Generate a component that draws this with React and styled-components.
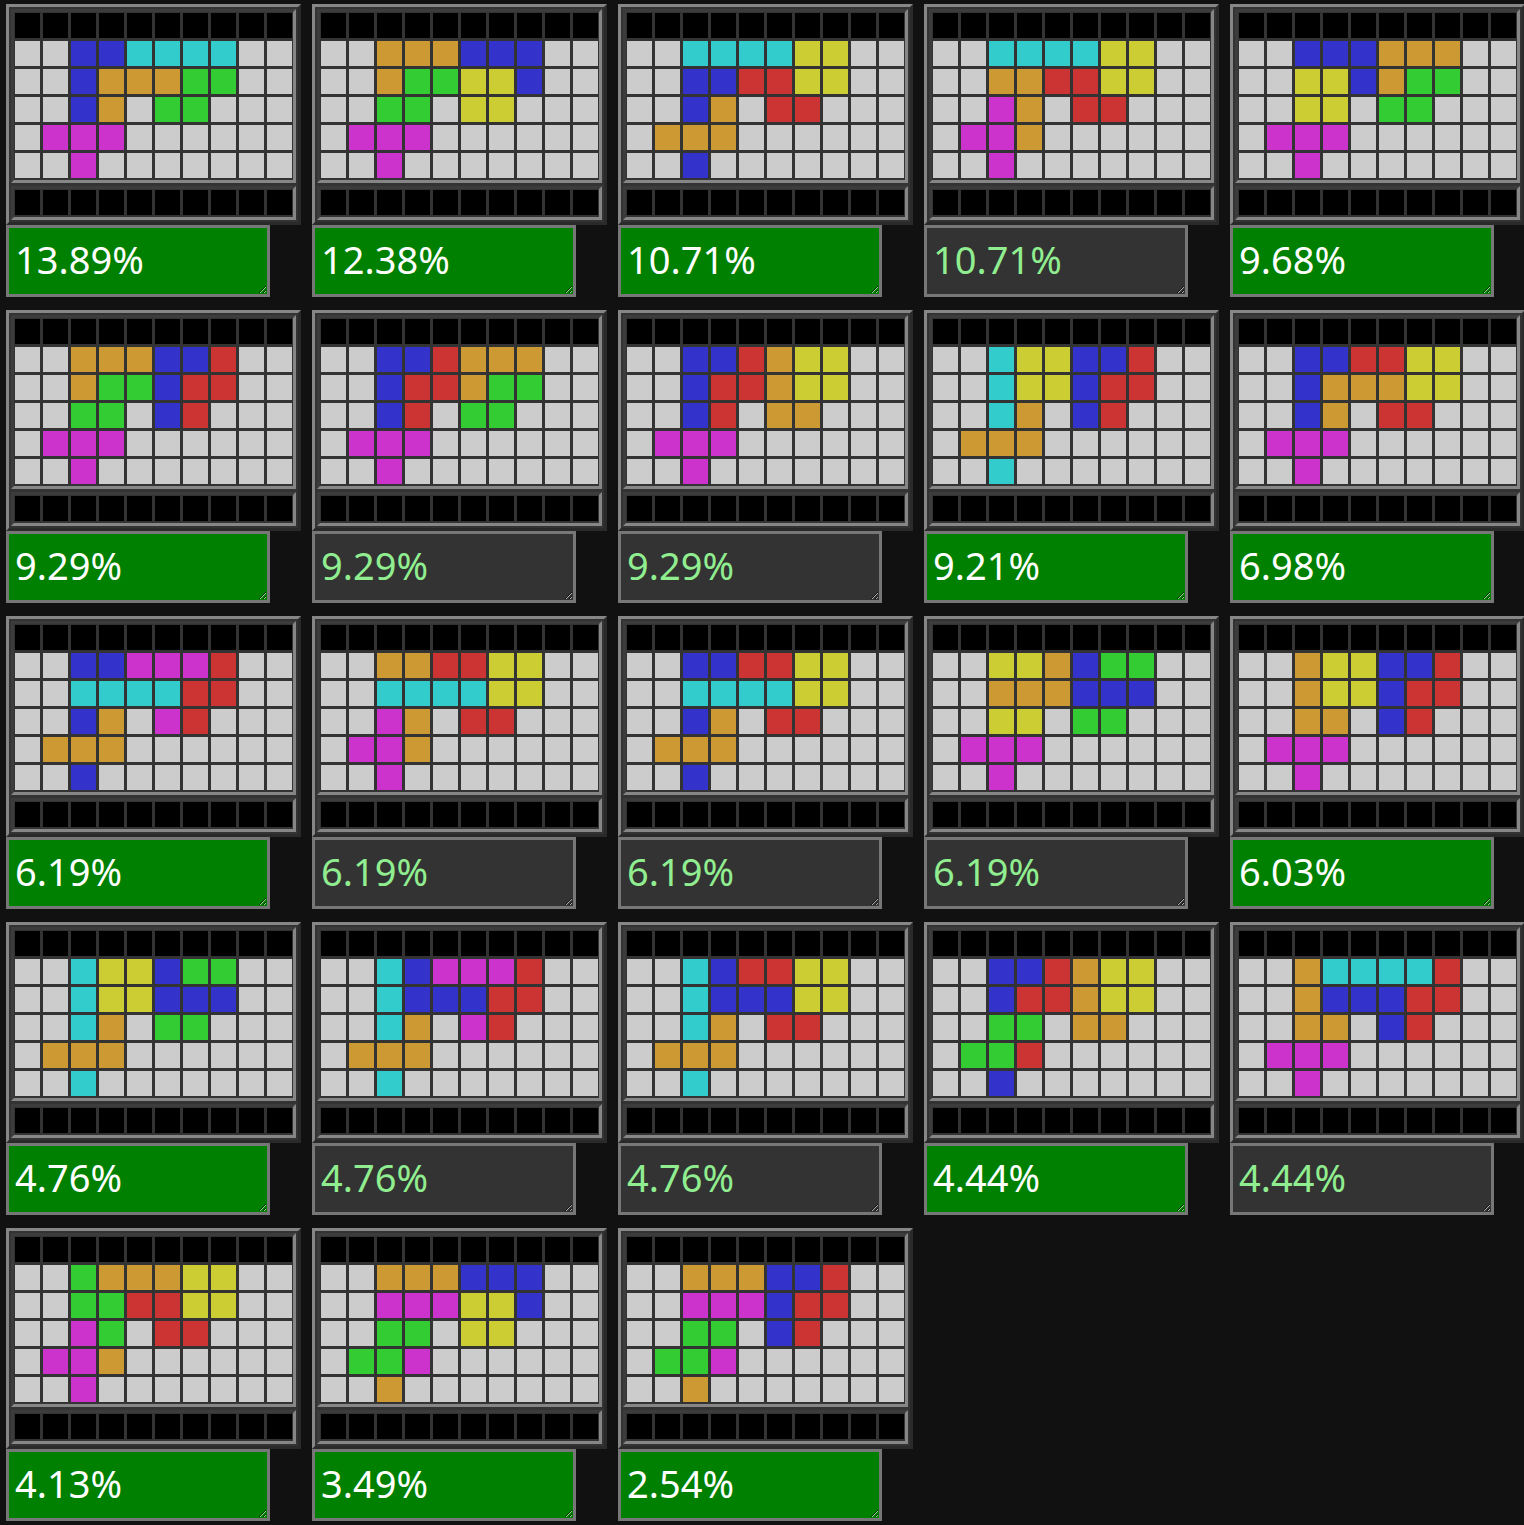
import React from 'react'
import styled, { createGlobalStyle } from 'styled-components'

const GlobalStyle = createGlobalStyle`
  html, body {
    margin: 0;
    padding: 0;
    background: #111111;
  }
  body {
    font-family: "Noto Sans", "Open Sans", sans-serif;
  }
`

const COLORS = {
  '.': '#cccccc',
  B: '#3333cc',
  C: '#33cccc',
  O: '#cc9933',
  G: '#33cc33',
  M: '#cc33cc',
  Y: '#cccc33',
  R: '#cc3333',
  K: '#000000',
}

// each board: 5 rows of 10 cells, score, whether it's a best pick
const results = [
  { score: '13.89%', best: true, rows: ['..BBCCCC..', '..BOOOGG..', '..BO.GG...', '.MMM......', '..M.......'] },
  { score: '12.38%', best: true, rows: ['..OOOBBB..', '..OGGYYB..', '..GG.YY...', '.MMM......', '..M.......'] },
  { score: '10.71%', best: true, rows: ['..CCCCYY..', '..BBRRYY..', '..BO.RR...', '.OOO......', '..B.......'] },
  { score: '10.71%', best: false, rows: ['..CCCCYY..', '..OORRYY..', '..MO.RR...', '.MMO......', '..M.......'] },
  { score: '9.68%', best: true, rows: ['..BBBOOO..', '..YYBOGG..', '..YY.GG...', '.MMM......', '..M.......'] },

  { score: '9.29%', best: true, rows: ['..OOOBBR..', '..OGGBRR..', '..GG.BR...', '.MMM......', '..M.......'] },
  { score: '9.29%', best: false, rows: ['..BBROOO..', '..BRROGG..', '..BR.GG...', '.MMM......', '..M.......'] },
  { score: '9.29%', best: false, rows: ['..BBROYY..', '..BRROYY..', '..BR.OO...', '.MMM......', '..M.......'] },
  { score: '9.21%', best: true, rows: ['..CYYBBR..', '..CYYBRR..', '..CO.BR...', '.OOO......', '..C.......'] },
  { score: '6.98%', best: true, rows: ['..BBRRYY..', '..BOOOYY..', '..BO.RR...', '.MMM......', '..M.......'] },

  { score: '6.19%', best: true, rows: ['..BBMMMR..', '..CCCCRR..', '..BO.MR...', '.OOO......', '..B.......'] },
  { score: '6.19%', best: false, rows: ['..OORRYY..', '..CCCCYY..', '..MO.RR...', '.MMO......', '..M.......'] },
  { score: '6.19%', best: false, rows: ['..BBRRYY..', '..CCCCYY..', '..BO.RR...', '.OOO......', '..B.......'] },
  { score: '6.19%', best: false, rows: ['..YYOBGG..', '..OOOBBB..', '..YY.GG...', '.MMM......', '..M.......'] },
  { score: '6.03%', best: true, rows: ['..OYYBBR..', '..OYYBRR..', '..OO.BR...', '.MMM......', '..M.......'] },

  { score: '4.76%', best: true, rows: ['..CYYBGG..', '..CYYBBB..', '..CO.GG...', '.OOO......', '..C.......'] },
  { score: '4.76%', best: false, rows: ['..CBMMMR..', '..CBBBRR..', '..CO.MR...', '.OOO......', '..C.......'] },
  { score: '4.76%', best: false, rows: ['..CBRRYY..', '..CBBBYY..', '..CO.RR...', '.OOO......', '..C.......'] },
  { score: '4.44%', best: true, rows: ['..BBROYY..', '..BRROYY..', '..GG.OO...', '.GGR......', '..B.......'] },
  { score: '4.44%', best: false, rows: ['..OCCCCR..', '..OBBBRR..', '..OO.BR...', '.MMM......', '..M.......'] },

  { score: '4.13%', best: true, rows: ['..GOOOYY..', '..GGRRYY..', '..MG.RR...', '.MMO......', '..M.......'] },
  { score: '3.49%', best: true, rows: ['..OOOBBB..', '..MMMYYB..', '..GG.YY...', '.GGM......', '..O.......'] },
  { score: '2.54%', best: true, rows: ['..OOOBBR..', '..MMMBRR..', '..GG.BR...', '.GGM......', '..O.......'] },
]

const Page = styled.div`
  display: grid;
  grid-template-columns: repeat(5, 295px);
  column-gap: 11px;
  row-gap: 13px;
  padding: 4px 0 0 6px;
  align-items: start;
`

const Card = styled.div`
  display: flex;
  flex-direction: column;
  align-items: flex-start;
`

const Board = styled.div`
  width: 295px;
  box-sizing: border-box;
  display: flex;
  flex-direction: column;
  gap: 3px;
  padding: 2px;
  background: #333333;
  border: 3px solid;
  border-color: #868686 #2a2a2a #2a2a2a #868686;
`

const Well = styled.div`
  display: grid;
  grid-template-columns: repeat(10, 1fr);
  gap: 3px;
  padding: 1px 1px 2px 1px;
  border: 3px solid;
  border-color: #3c3c3c #868686 #868686 #3c3c3c;
`

const Cell = styled.div`
  height: 25px;
  background: ${p => COLORS[p.$c]};
`

const Score = styled.div`
  width: 264px;
  height: 72px;
  box-sizing: border-box;
  border: 3px solid #777777;
  background: ${p => (p.$best ? '#008000' : '#333333')};
  color: ${p => (p.$best ? '#ffffff' : '#90ee90')};
  font-family: "Noto Sans", "Open Sans", sans-serif;
  font-size: 38px;
  padding: 5px 0 0 6px;
  overflow: hidden;
  resize: both;
`

const BLACK_ROW = 'KKKKKKKKKK'

const Grid = ({ rows }) => (
  <Well>
    {rows.join('').split('').map((c, i) => (
      <Cell key={i} $c={c} />
    ))}
  </Well>
)

const ResultCard = ({ result }) => (
  <Card>
    <Board>
      <Grid rows={[BLACK_ROW, ...result.rows]} />
      <Grid rows={[BLACK_ROW]} />
    </Board>
    <Score $best={result.best}>{result.score}</Score>
  </Card>
)

export default function App() {
  return (
    <>
      <GlobalStyle />
      <Page>
        {results.map((r, i) => (
          <ResultCard key={i} result={r} />
        ))}
      </Page>
    </>
  )
}
